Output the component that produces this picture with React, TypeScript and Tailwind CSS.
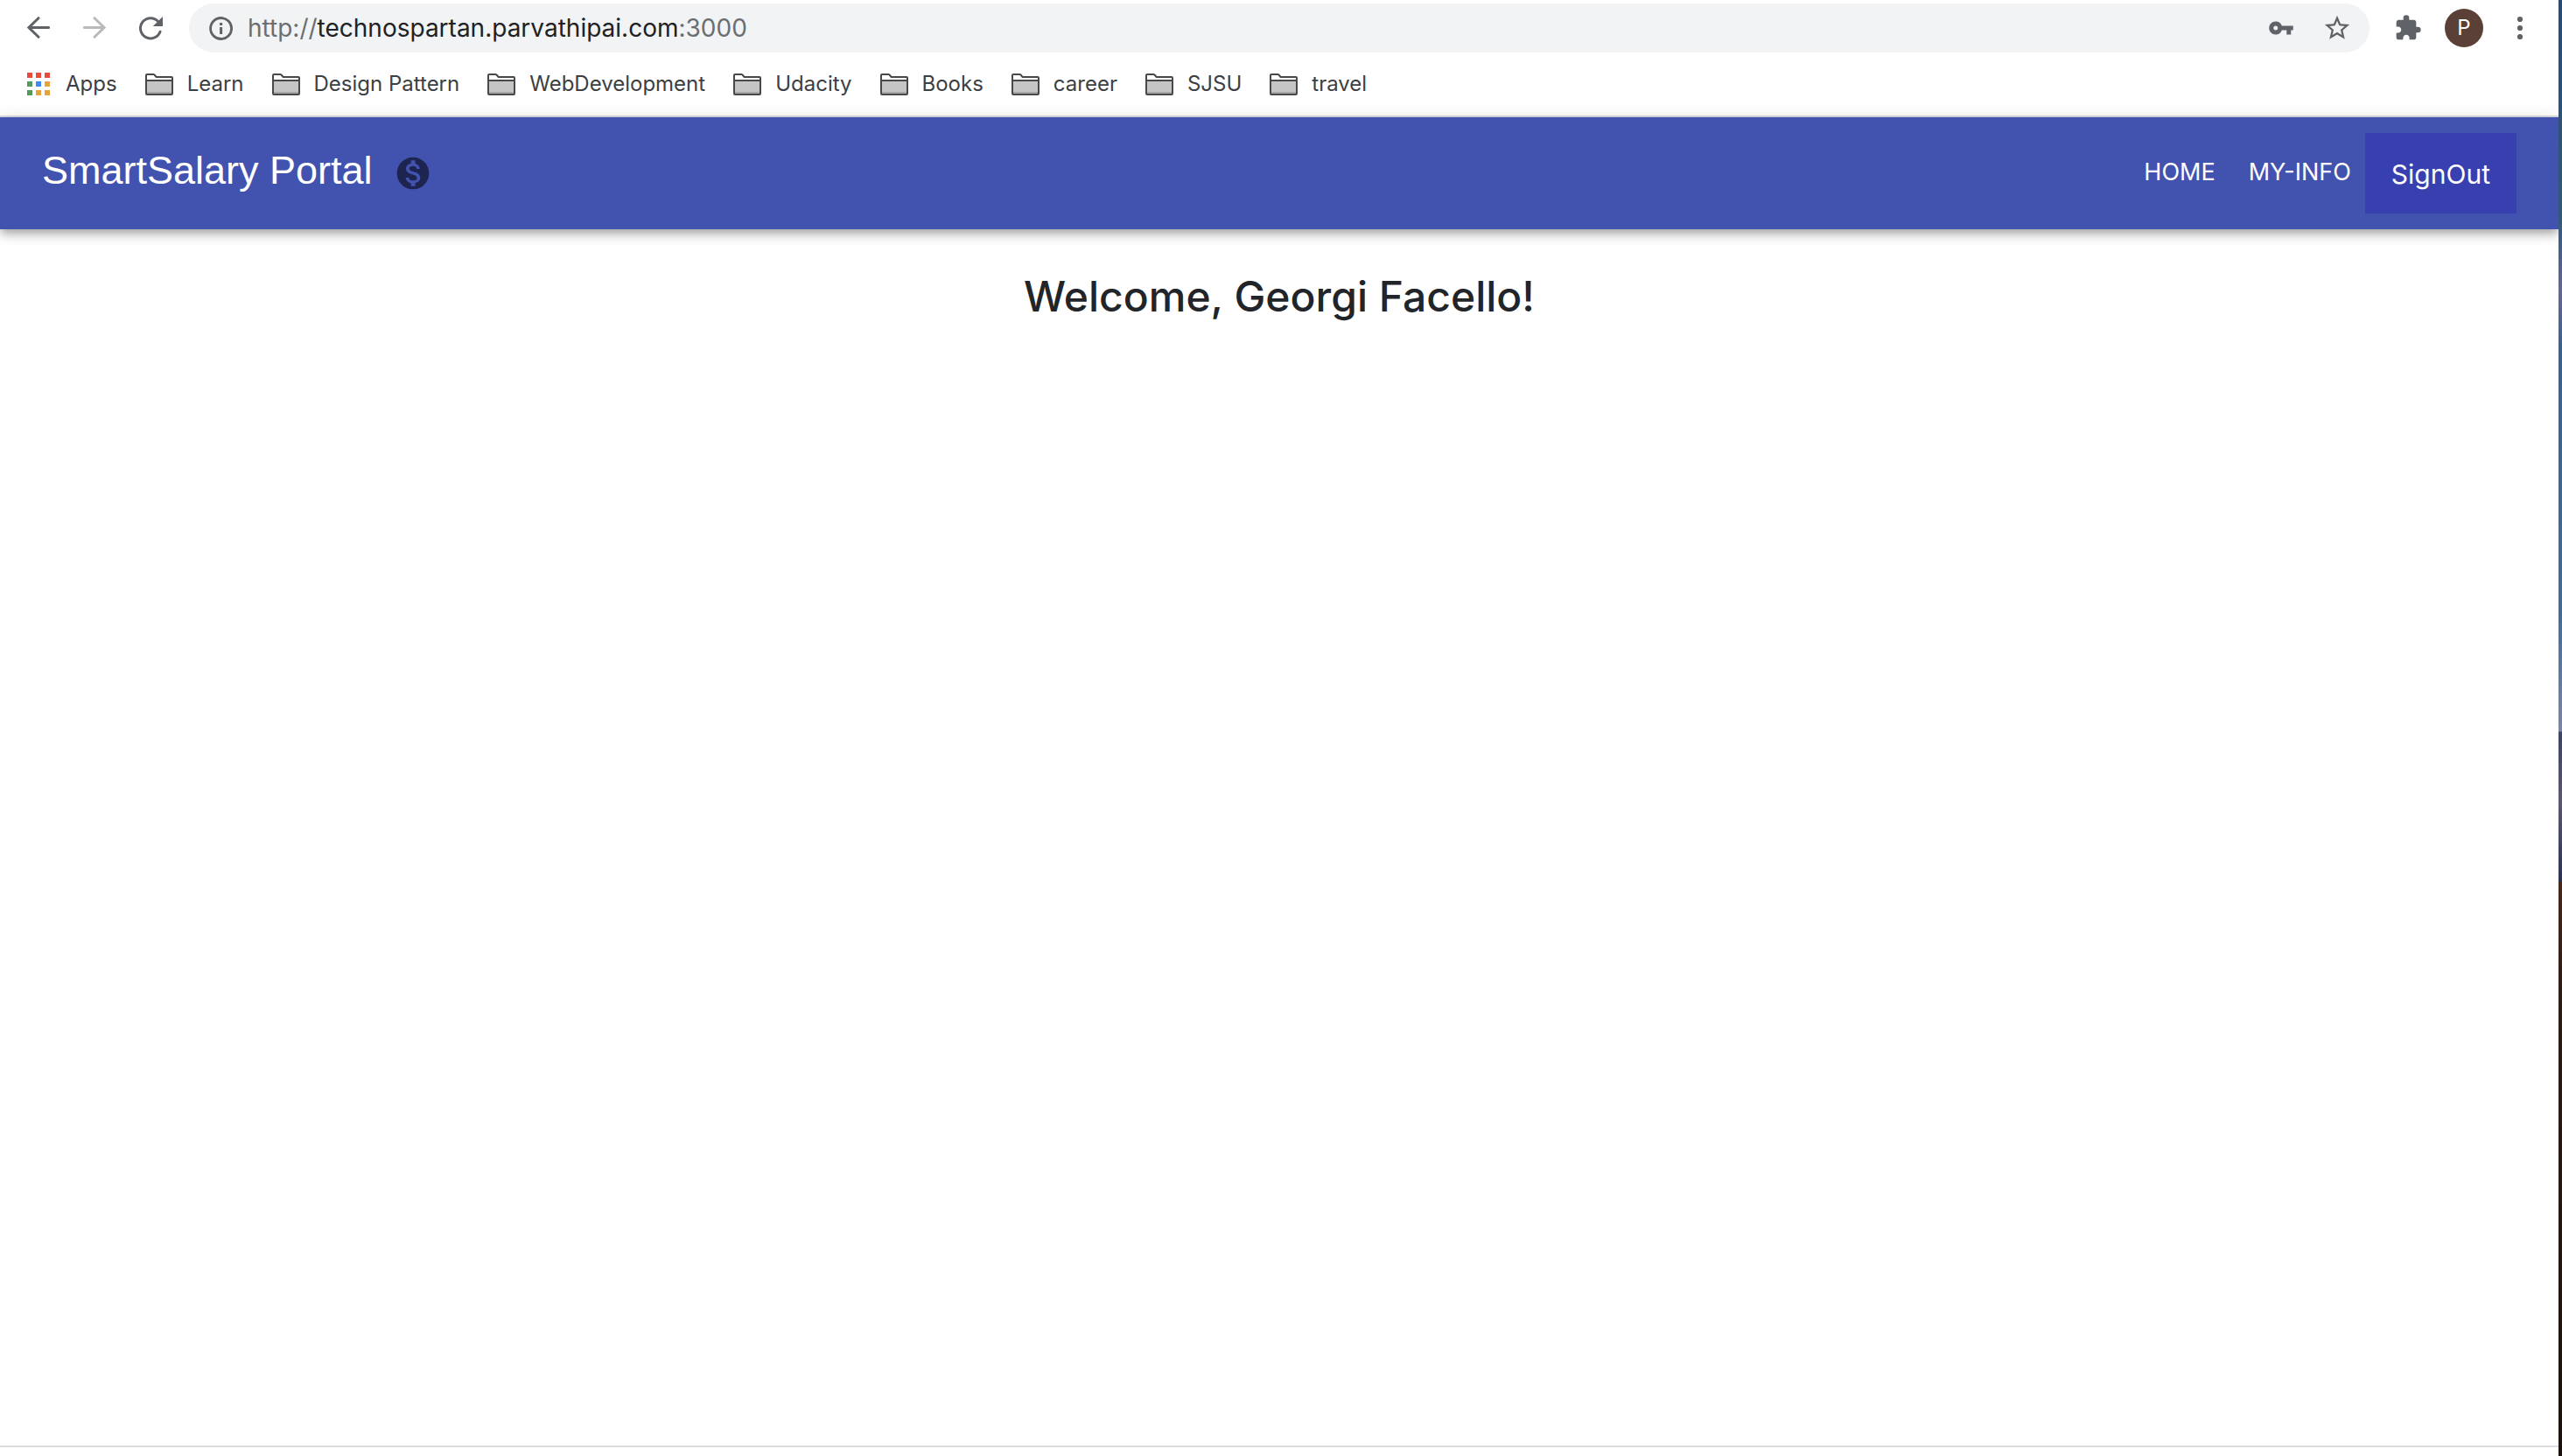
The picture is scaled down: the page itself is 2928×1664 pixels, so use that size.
import React from "react";
import { MdExtension, MdMonetizationOn, MdStarBorder, MdVpnKey } from "react-icons/md";

const folders = ["Learn", "Design Pattern", "WebDevelopment", "Udacity", "Books", "career", "SJSU", "travel"];

function ArrowIcon({ className }: { className?: string }) {
  return (
    <svg width="26" height="26" viewBox="0 0 26 26" fill="none" stroke="currentColor" strokeWidth="3" className={className} aria-hidden="true">
      <path d="M24.6 12.5H2M13 1.7 2 12.5l11 10.8" strokeLinecap="round" strokeLinejoin="miter" />
    </svg>
  );
}

function ReloadIcon() {
  return (
    <svg width="27" height="27" viewBox="0 0 27 27" fill="none" aria-hidden="true">
      <path d="M24 17.2A11.6 11.6 0 1 1 22 5.9" stroke="currentColor" strokeWidth="3" strokeLinecap="round" />
      <path d="M27 0v11H15.8z" fill="currentColor" />
    </svg>
  );
}

function InfoIcon() {
  return (
    <svg width="28" height="28" viewBox="0 0 28 28" fill="none" aria-hidden="true">
      <circle cx="13.6" cy="14.5" r="12" stroke="currentColor" strokeWidth="2.8" />
      <path d="M12.1 8h3v3h-3zM12.1 13h3v8h-3z" fill="currentColor" />
    </svg>
  );
}

function MenuDotsIcon() {
  return (
    <svg width="8" height="28" viewBox="0 0 8 28" fill="currentColor" aria-hidden="true">
      <circle cx="4" cy="4" r="3.1" />
      <circle cx="4" cy="14" r="3.1" />
      <circle cx="4" cy="24" r="3.1" />
    </svg>
  );
}

function AppsIcon() {
  return (
    <svg width="26" height="26" viewBox="0 0 26 26" aria-hidden="true">
      <path d="M0 0h6v6H0zM10 0h6v6h-6zM20 0h6v6h-6z" fill="#e94b3d" />
      <path d="M0 10h6v6H0zM0 20h6v6H0z" fill="#539b5c" />
      <path d="M10 10h6v6h-6z" fill="#4189f0" />
      <path d="M20 10h6v6h-6zM10 20h6v6h-6zM20 20h6v6h-6z" fill="#e6a53a" />
    </svg>
  );
}

function FolderIcon() {
  return (
    <svg width="32" height="26" viewBox="0 0 32 26" aria-hidden="true">
      <path d="M1 24V3q0-1 1-1h7.5q.6 0 1 .5L12.6 5H30q1 0 1 1v18q0 1-1 1H2q-1 0-1-1z" fill="#fff" />
      <path d="M2 9h28v15H2z" fill="#c5c5c5" />
      <path d="M2 22h28v2H2z" fill="#a6a6a6" />
      <path d="M1 24V3q0-1 1-1h7.5q.6 0 1 .5L12.6 5H30q1 0 1 1v18q0 1-1 1H2q-1 0-1-1zM1 9h30" fill="none" stroke="#484848" strokeWidth="2" />
    </svg>
  );
}

export default function App() {
  return (
    <div className="flex min-h-screen bg-white font-['Inter',sans-serif]">
      <div className="flex min-w-0 flex-1 flex-col">
        <header className="border-b-2 border-[#dadce0] pb-1">
          <div className="flex h-16 items-center pr-10 pl-[31px] text-[#5f6368]">
            <button type="button" aria-label="Back" className="mr-[38px]">
              <ArrowIcon />
            </button>
            <button type="button" aria-label="Forward" disabled className="mr-[38px] text-[#bababc]">
              <ArrowIcon className="rotate-y-180" />
            </button>
            <button type="button" aria-label="Reload" className="mr-[30px]">
              <ReloadIcon />
            </button>
            <div className="flex h-14 flex-1 items-center rounded-full bg-[#f1f3f4] pr-5 pl-[23px] text-[#5f6368]">
              <button type="button" aria-label="View site information" className="mr-4">
                <InfoIcon />
              </button>
              <div
                role="textbox"
                aria-label="Address"
                contentEditable
                suppressContentEditableWarning
                className="flex-1 text-[28px] leading-8 whitespace-nowrap text-[#6b6e71] outline-none"
              >
                http://<span className="text-[#202124]">technospartan.parvathipai.com</span>:3000
              </div>
              <button type="button" aria-label="Saved passwords" className="mr-8">
                <MdVpnKey size={30} />
              </button>
              <button type="button" aria-label="Bookmark this page">
                <MdStarBorder size={34} />
              </button>
            </div>
            <button type="button" aria-label="Extensions" className="ml-7">
              <MdExtension size={32} />
            </button>
            <button type="button" aria-label="Profile" className="ml-[26px] size-11 rounded-full bg-[#5a4037] text-2xl text-white">
              P
            </button>
            <button type="button" aria-label="Browser menu" className="ml-[38px]">
              <MenuDotsIcon />
            </button>
          </div>
          <nav aria-label="Bookmarks" className="flex h-16 items-center gap-8 pl-[31px] text-2xl leading-8 text-[#3c4043]">
            <button type="button" className="flex items-center gap-[18px]">
              <AppsIcon />
              Apps
            </button>
            {folders.map((name) => (
              <button key={name} type="button" className="flex items-center gap-4">
                <FolderIcon />
                {name}
              </button>
            ))}
          </nav>
        </header>

        <div className="flex h-32 items-center justify-between bg-[#4252af] pr-12 pl-12 text-white shadow-[0_4px_8px_-2px_rgba(0,0,0,0.2),0_8px_10px_0_rgba(0,0,0,0.14),0_2px_20px_0_rgba(0,0,0,0.12)]">
          <div className="flex items-center gap-6">
            <span className="pb-1.5 font-['Liberation_Sans',sans-serif] text-[45px] leading-[52px]">SmartSalary Portal</span>
            <MdMonetizationOn size={44} className="text-[#1e2450]" aria-hidden="true" />
          </div>
          <nav aria-label="Main" className="flex items-center">
            <a href="#home" className="mr-[38px] pb-0.5 text-[27px] leading-8">
              HOME
            </a>
            <a href="#my-info" className="mr-4 pb-0.5 text-[27px] leading-8">
              MY-INFO
            </a>
            <button type="button" className="h-[92px] bg-[#3840af] px-[30px] pt-0.5 text-[30px]">
              SignOut
            </button>
          </nav>
        </div>

        <main className="flex-1 pt-12">
          <h1 className="text-center text-5xl leading-[58px] font-medium text-[#212529]">Welcome, Georgi Facello!</h1>
        </main>
        <footer className="h-3 border-t-2 border-[#dadce0]" />
      </div>
      <div className="w-1 bg-[linear-gradient(#2c4a6e_0%,#34587a_15%,#66688a_20%,#3f6088_24%,#466a90_42%,#7c86a0_50.2%,#3f4460_50.3%,#5c5870_55%,#2c3350_60.5%,#45291a_60.6%,#2e1c16_68%,#1a120e_100%)]" />
    </div>
  );
}
